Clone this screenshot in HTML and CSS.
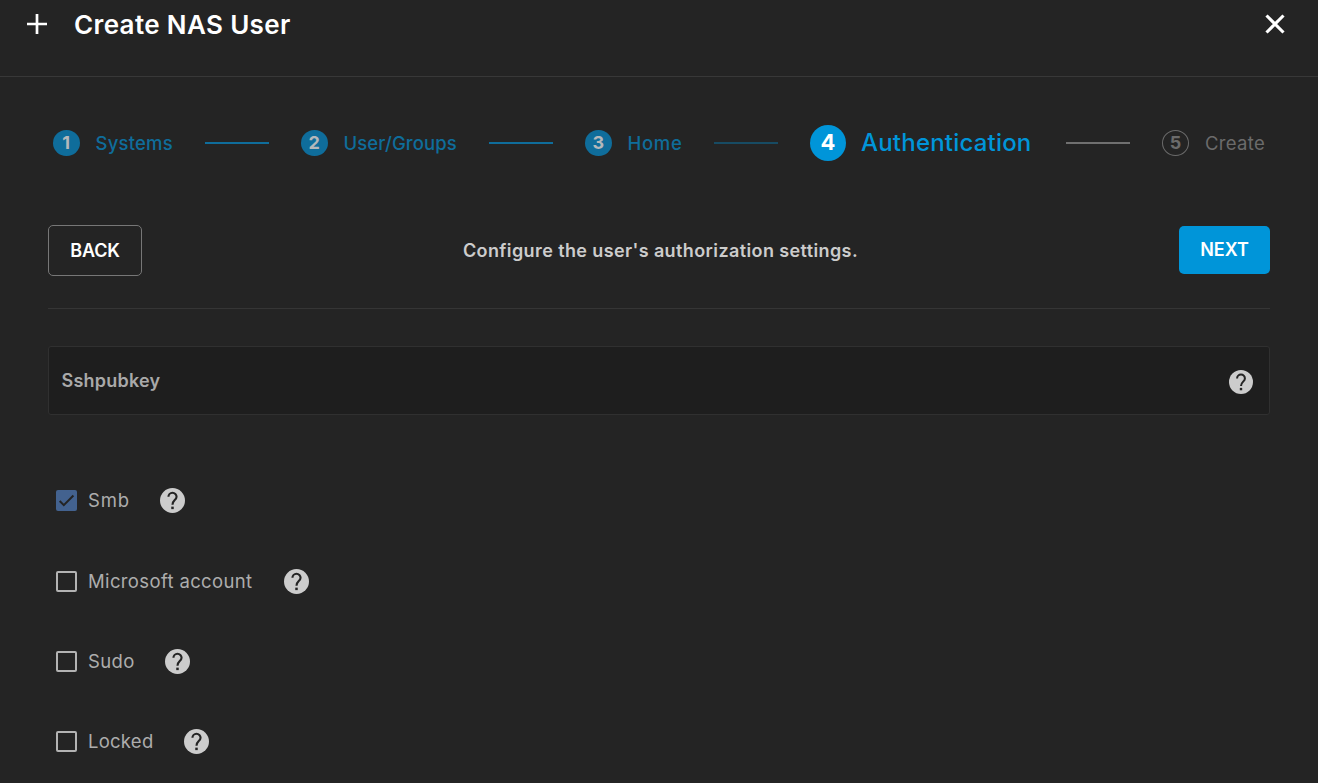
FILE: index.html
```
<!DOCTYPE html>
<html lang="en">
<head>
<meta charset="utf-8">
<title>Create NAS User</title>
<link rel="stylesheet" href="styles.css">
</head>
<body>
<svg class="defs" aria-hidden="true">
  <symbol id="help" viewBox="2 2 20 20"><circle cx="12" cy="12" r="10"/><path class="mark" d="M8.75 9a3.25 3.25 0 1 1 6.5 0c0 2.6-3.25 2.9-3.25 6.3"/><path class="dot" d="M11 16.9h2v2h-2z"/></symbol>
</svg>
<header class="header">
  <svg class="plus" viewBox="0 0 20 20"><path d="M10 0v20M0 10h20"/></svg>
  <h1 class="title">Create NAS User</h1>
  <svg class="close" viewBox="0 0 20 20"><path d="M1.5 1.5l17 17M18.5 1.5l-17 17"/></svg>
</header>
<main class="content">
  <ol class="stepper">
    <li class="step s1"><span class="num">1</span><span class="label">Systems</span></li>
    <li class="line"></li>
    <li class="step s2"><span class="num">2</span><span class="label">User/Groups</span></li>
    <li class="line"></li>
    <li class="step s3"><span class="num">3</span><span class="label">Home</span></li>
    <li class="line dim"></li>
    <li class="step s4 active"><span class="num">4</span><span class="label">Authentication</span></li>
    <li class="line pending"></li>
    <li class="step s5 todo"><span class="num">5</span><span class="label">Create</span></li>
  </ol>
  <div class="actions">
    <button class="btn back">BACK</button>
    <p class="hint">Configure the user's authorization settings.</p>
    <button class="btn next">NEXT</button>
  </div>
  <div class="field"><span class="placeholder">Sshpubkey</span><svg class="help"><use href="#help"/></svg></div>
  <div class="options">
    <div class="option"><span class="box checked"><svg viewBox="0 0 21 21"><path d="M3.7 11l4.1 4.1L17.4 5.5"/></svg></span><span class="text smb">Smb</span><svg class="help"><use href="#help"/></svg></div>
    <div class="option"><span class="box"></span><span class="text microsoft">Microsoft account</span><svg class="help"><use href="#help"/></svg></div>
    <div class="option"><span class="box"></span><span class="text sudo">Sudo</span><svg class="help"><use href="#help"/></svg></div>
    <div class="option"><span class="box"></span><span class="text locked">Locked</span><svg class="help"><use href="#help"/></svg></div>
  </div>
</main>
</body>
</html>
```
FILE: styles.css
```
* { box-sizing: border-box; }
body {
  margin: 0;
  height: 783px;
  overflow: hidden;
  background: #242424;
  color: #fff;
  font: 18px/24px Inter, "Liberation Sans", sans-serif;
  white-space: nowrap;
}
.defs { display: none; }
svg { display: block; flex: none; }

.header {
  display: flex;
  height: 77px;
  padding: 8px 33px 0 27px;
  border-bottom: 1px solid #383838;
}
.plus, .close { width: 20px; height: 20px; margin-top: 6px; fill: none; stroke: #fff; }
.plus { stroke-width: 2.7; }
.close { stroke-width: 3.1; }
.title {
  flex: 1;
  margin: 1px 0 0 27px;
  font-size: 26px;
  line-height: 32px;
  font-weight: 600;
  letter-spacing: .36px;
}

.content { padding: 48px 48px 0; }
.stepper {
  display: flex;
  align-items: center;
  gap: 32px;
  height: 36px;
  margin: 0 0 0 5px;
  padding: 0;
  list-style: none;
}
.step { display: flex; flex: none; align-items: center; gap: 16px; color: #0f6d9b; font-size: 18.5px; font-weight: 500; }
.num {
  display: flex;
  flex: none;
  align-items: center;
  justify-content: center;
  width: 26.5px;
  height: 26px;
  border-radius: 50%;
  background: #0f6d9b;
  color: #b4b8bb;
  font-size: 18px;
  font-weight: 700;
  letter-spacing: 0;
}
.s1 { width: 120px; letter-spacing: .2px; }
.s2 { width: 156px; letter-spacing: .1px; }
.s3 { width: 97px; letter-spacing: .7px; }
.s4 { width: 224px; letter-spacing: .2px; }
.s5 { width: 103px; letter-spacing: .3px; }
.line { flex: none; width: 64px; height: 2px; background: #0f6d9b; }
.line.dim { background: #174b63; }
.line.pending { background: #707070; }
.step.active { gap: 15px; color: #0095d9; font-size: 24px; font-weight: 550; }
.active .num { width: 36px; height: 36px; padding-bottom: 2px; background: #0095d9; color: #fff; font-size: 22px; }
.step.todo { color: #6b6b6b; font-weight: 400; }
.todo .num { width: 27px; border: 1px solid #6b6b6b; background: none; color: #6b6b6b; }

.actions {
  display: flex;
  align-items: center;
  justify-content: space-between;
  height: 148px;
  padding-top: 32px;
  border-bottom: 1px solid #353535;
}
.btn {
  padding: 0;
  border: 0;
  border-radius: 5px;
  color: #fff;
  font: 600 18px/24px Inter, "Liberation Sans", sans-serif;
}
.back { width: 94px; height: 51px; border: 1px solid #777; background: none; letter-spacing: -.17px; }
.next { width: 91px; height: 48px; margin-bottom: 1px; background: #0095d9; }
.hint { margin: 0; color: #ccc; font-weight: 600; letter-spacing: .39px; }

.field {
  display: flex;
  align-items: center;
  justify-content: space-between;
  height: 69px;
  margin-top: 37px;
  padding: 0 16px 0 12.5px;
  border: 1px solid #303030;
  border-radius: 3px;
  background: #1e1e1e;
}
.placeholder { color: #a9a9a9; font-weight: 600; letter-spacing: .22px; }
.help { width: 25px; height: 25px; fill: #ccc; }
.mark { fill: none; stroke: #242424; stroke-width: 1.7; }
.dot { fill: #242424; }
.field .help { width: 24px; height: 24px; margin-top: 2px; }

.options { display: flex; flex-direction: column; margin-top: 46px; padding-left: 8px; }
.option { display: flex; align-items: center; height: 80px; }
.option:first-child { height: 79px; margin-bottom: 1px; }
.box { flex: none; width: 21px; height: 21px; border: 2px solid #b3b3b3; border-radius: 2px; }
.box.checked { border: 0; background: #43628f; }
.box path { fill: none; stroke: #242424; stroke-width: 2; }
.text { padding-bottom: 1px; margin-left: 11px; color: #adadad; font-size: 18.5px; }
.smb { width: 72px; letter-spacing: .8px; }
.microsoft { width: 196px; letter-spacing: .36px; }
.sudo { width: 77px; letter-spacing: .4px; }
.locked { width: 96px; letter-spacing: .25px; }
```
